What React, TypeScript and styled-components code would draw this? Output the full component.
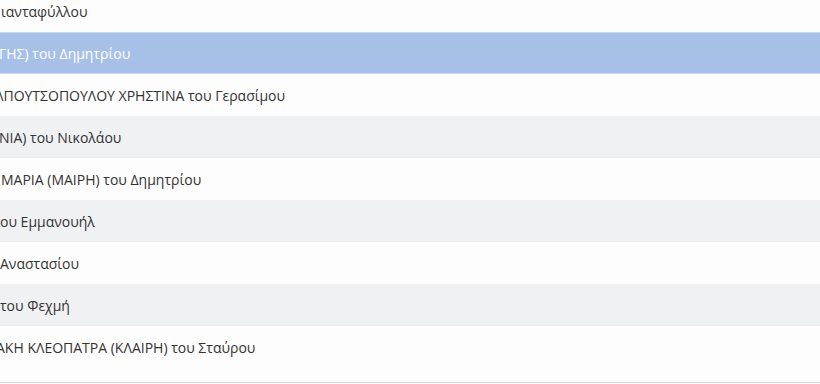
import React from 'react';
import styled, { createGlobalStyle } from 'styled-components';

const GlobalStyle = createGlobalStyle`
  html, body {
    margin: 0;
    padding: 0;
    background: #fdfdfd;
    overflow: hidden;
  }
`;

// Viewport of the scrolled list
const ListViewport = styled.div`
  width: 820px;
  height: 384px;
  overflow: hidden;
  background: #fdfdfd;
`;

const List = styled.div`
  display: flex;
  flex-direction: column;
  margin-top: -10px;
  padding-bottom: 14px;
  border-bottom: 1px solid #d6d7d9;
`;

const Row = styled.div<{ $striped: boolean; $selected: boolean }>`
  display: flex;
  align-items: center;
  height: 42px;
  box-sizing: border-box;
  overflow: hidden;
  white-space: nowrap;
  font-family: 'Open Sans', 'Noto Sans', sans-serif;
  font-size: 14px;
  color: ${p => (p.$selected ? '#ffffff' : '#333333')};
  background: ${p => (p.$selected ? '#a6c0e7' : p.$striped ? '#f0f1f3' : '#fdfdfd')};
  border-top: 1px solid ${p => (p.$selected ? '#c8d9f1' : 'transparent')};
  border-bottom: 1px solid ${p => (p.$selected ? '#c8d9f1' : p.$striped ? '#ebecee' : 'transparent')};
`;

const Name = styled.span<{ $shift: number }>`
  margin-left: ${p => p.$shift}px;
`;

interface Person {
  id: number;
  name: string;
  shift: number;
}

const people: Person[] = [
  { id: 1, name: 'ιανταφύλλου', shift: 1 },
  { id: 2, name: 'ΓΗΣ) του Δημητρίου', shift: -1 },
  { id: 3, name: 'ΛΠΟΥΤΣΟΠΟΥΛΟΥ ΧΡΗΣΤΙΝΑ του Γερασίμου', shift: -5 },
  { id: 4, name: 'ΝΙΑ) του Νικολάου', shift: -1 },
  { id: 5, name: ' ΜΑΡΙΑ (ΜΑΙΡΗ) του Δημητρίου', shift: 1 },
  { id: 6, name: 'ου Εμμανουήλ', shift: 0 },
  { id: 7, name: 'Αναστασίου', shift: 0 },
  { id: 8, name: 'του Φεχμή', shift: 0 },
  { id: 9, name: 'ΑΚΗ ΚΛΕΟΠΑΤΡΑ (ΚΛΑΙΡΗ) του Σταύρου', shift: -4 },
];

const App: React.FC = () => {
  const selectedId = 2;
  return (
    <>
      <GlobalStyle />
      <ListViewport>
        <List>
          {people.map((p, i) => (
            <Row key={p.id} $striped={i % 2 === 1 && p.id !== selectedId} $selected={p.id === selectedId}>
              <Name $shift={p.shift}>{p.name}</Name>
            </Row>
          ))}
        </List>
      </ListViewport>
    </>
  );
};

export default App;
